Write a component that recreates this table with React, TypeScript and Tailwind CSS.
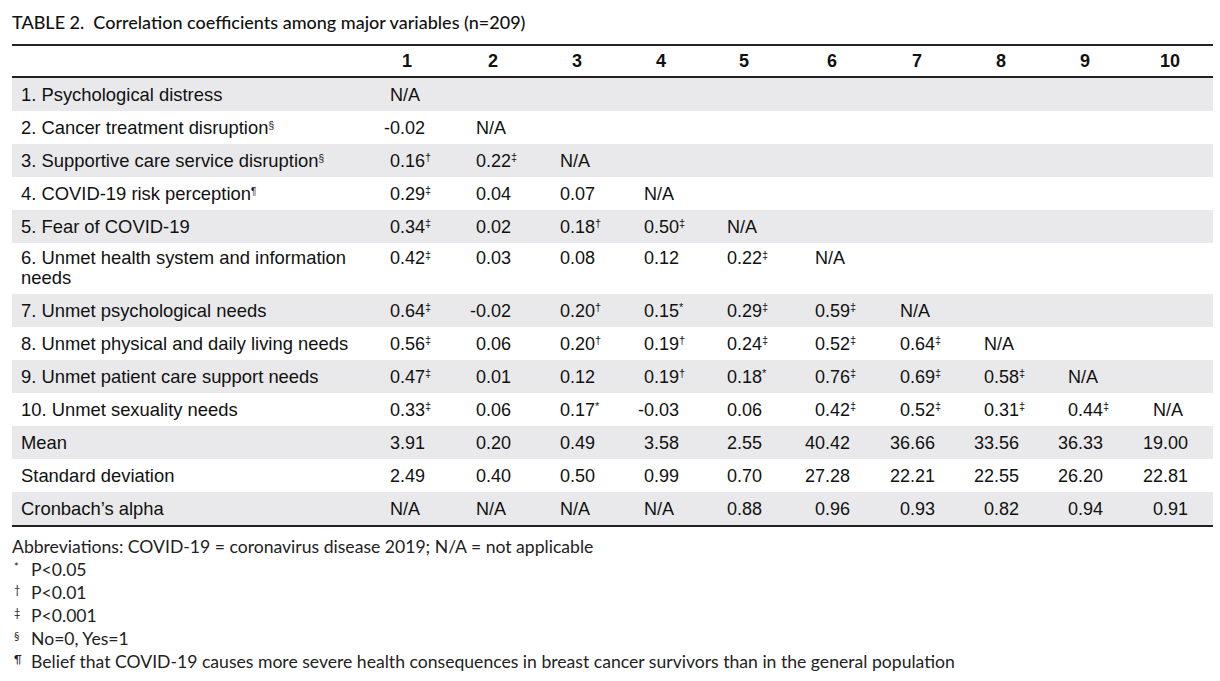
const rows: { label: React.ReactNode; cells: string[]; gray: boolean; tall?: boolean }[] = [
  { label: '1. Psychological distress', cells: ['N/A'], gray: true },
  { label: <>2. Cancer treatment disruption<sup className="text-[10px]">§</sup></>, cells: ['-0.02', 'N/A'], gray: false },
  { label: <>3. Supportive care service disruption<sup className="text-[10px]">§</sup></>, cells: ['0.16†', '0.22‡', 'N/A'], gray: true },
  { label: <>4. COVID-19 risk perception<sup className="text-[10px]">¶</sup></>, cells: ['0.29‡', '0.04', '0.07', 'N/A'], gray: false },
  { label: '5. Fear of COVID-19', cells: ['0.34‡', '0.02', '0.18†', '0.50‡', 'N/A'], gray: true },
  { label: <>6. Unmet health system and information<br />needs</>, cells: ['0.42‡', '0.03', '0.08', '0.12', '0.22‡', 'N/A'], gray: false, tall: true },
  { label: '7. Unmet psychological needs', cells: ['0.64‡', '-0.02', '0.20†', '0.15*', '0.29‡', '0.59‡', 'N/A'], gray: true },
  { label: '8. Unmet physical and daily living needs', cells: ['0.56‡', '0.06', '0.20†', '0.19†', '0.24‡', '0.52‡', '0.64‡', 'N/A'], gray: false },
  { label: '9. Unmet patient care support needs', cells: ['0.47‡', '0.01', '0.12', '0.19†', '0.18*', '0.76‡', '0.69‡', '0.58‡', 'N/A'], gray: true },
  { label: '10. Unmet sexuality needs', cells: ['0.33‡', '0.06', '0.17*', '-0.03', '0.06', '0.42‡', '0.52‡', '0.31‡', '0.44‡', 'N/A'], gray: false },
  { label: 'Mean', cells: ['3.91', '0.20', '0.49', '3.58', '2.55', '40.42', '36.66', '33.56', '36.33', '19.00'], gray: true },
  { label: 'Standard deviation', cells: ['2.49', '0.40', '0.50', '0.99', '0.70', '27.28', '22.21', '22.55', '26.20', '22.81'], gray: false },
  { label: 'Cronbach’s alpha', cells: ['N/A', 'N/A', 'N/A', 'N/A', '0.88', '0.96', '0.93', '0.82', '0.94', '0.91'], gray: true },
]

const grid = 'grid grid-cols-[368px_86px_84px_84px_83px_88px_85px_84px_84px_85px_70px]'

// decimal-aligned cell: integer part sits in a fixed right-aligned box
function Cell({ v }: { v?: string }) {
  if (!v) return <div />
  if (v === 'N/A') return <div className="pl-[10px]">N/A</div>
  const mark = v.match(/[*†‡]$/)?.[0]
  const num = mark ? v.slice(0, -1) : v
  const [int, dec] = num.split('.')
  return (
    <div className="whitespace-nowrap">
      <span className="inline-block w-[20px] text-right">{int}</span>.{dec}
      {mark && <sup className="text-[11px]">{mark}</sup>}
    </div>
  )
}

const notes: [string, string][] = [
  ['*', 'P<0.05'],
  ['†', 'P<0.01'],
  ['‡', 'P<0.001'],
  ['§', 'No=0, Yes=1'],
  ['¶', 'Belief that COVID-19 causes more severe health consequences in breast cancer survivors than in the general population'],
]

export default function App() {
  return (
    <div className="min-h-[681px] w-[1220px] bg-white pl-[12px] text-[#111]">
      <h1 className="pt-[10px] pb-[10px] text-[18px] leading-[24px] font-medium font-['Lato',sans-serif]">
        TABLE 2.&nbsp; Correlation coefficients among major variables (n=209)
      </h1>

      <div className="w-[1201px] font-['Liberation_Sans',Arial,sans-serif] text-[18px] leading-[20px]">
        <div className={`${grid} h-[34px] items-center border-y-2 border-[#222] font-bold`}>
          <div />
          {Array.from({ length: 10 }, (_, i) => (
            <div key={i} className="w-[54px] text-center">{i + 1}</div>
          ))}
        </div>

        {rows.map((r, i) => (
          <div
            key={i}
            className={`${grid} ${r.gray ? 'bg-[#e9e9eb]' : ''} ${r.tall ? 'pt-[5px] pb-[6px] items-start' : 'h-[33px] items-center'}`}
          >
            <div className="pl-[9px] text-[18.4px]">{r.label}</div>
            {Array.from({ length: 10 }, (_, j) => (
              <Cell key={j} v={r.cells[j]} />
            ))}
          </div>
        ))}
        <div className="h-[2px] bg-[#222]" />
      </div>

      <div className="pt-[8px] text-[17.6px] leading-[23px] text-[#222] font-['Lato',sans-serif]">
        <p>Abbreviations: COVID-19 = coronavirus disease 2019; N/A = not applicable</p>
        {notes.map(([m, t]) => (
          <p key={m} className="flex">
            <span className="w-[19px] pl-[2px] text-[11px] leading-[18px]">{m}</span>
            <span>{t}</span>
          </p>
        ))}
      </div>
    </div>
  )
}
